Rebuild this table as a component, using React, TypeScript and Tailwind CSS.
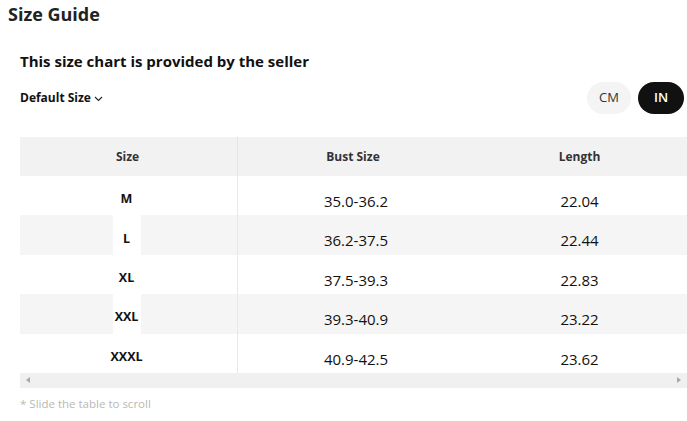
import React from 'react'

const rows = [
  { size: 'M', bust: '35.0-36.2', length: '22.04' },
  { size: 'L', bust: '36.2-37.5', length: '22.44' },
  { size: 'XL', bust: '37.5-39.3', length: '22.83' },
  { size: 'XXL', bust: '39.3-40.9', length: '23.22' },
  { size: 'XXXL', bust: '40.9-42.5', length: '23.62' },
]

const App = () => {
  return (
    <div className="w-[687px] h-[421px] overflow-hidden bg-white text-[#222] font-['Open_Sans','Noto_Sans',sans-serif]">
      <h1 className="pl-[8px] pt-[1px] text-[18px] leading-[26px] font-bold text-[#222]">Size Guide</h1>

      <div className="pl-[20px]">
        <h2 className="mt-[23px] text-[15px] leading-[22px] font-bold text-[#111]">
          This size chart is provided by the seller
        </h2>

        {/* Size selector + unit toggle */}
        <div className="mt-[10px] flex items-center justify-between pr-[3px]">
          <button className="flex items-center gap-[3px] text-[12px] font-bold text-[#111]">
            Default Size
            <svg width="9" height="6" viewBox="0 0 9 6" className="mt-[2px]">
              <path d="M1 1l3.5 3.5L8 1" fill="none" stroke="#222" strokeWidth="1.1" />
            </svg>
          </button>
          <div className="flex items-center gap-[7px]">
            <span className="flex h-[32px] w-[44px] items-center justify-center rounded-full bg-[#f4f4f4] text-[13px] text-[#333]">
              CM
            </span>
            <span className="flex h-[32px] w-[46px] items-center justify-center rounded-full bg-[#111] text-[13px] font-semibold text-white">
              IN
            </span>
          </div>
        </div>

        {/* Table */}
        <div className="mt-[23px] w-[667px]">
          <div className="grid grid-cols-[218px_234px_1fr] h-[39px] bg-[#f2f2f2] text-[12px] font-bold text-[#333]">
            <div className="flex items-center justify-center pr-[2px] border-r border-[#e4e4e4]">Size</div>
            <div className="flex items-center justify-center pr-[4px]">Bust Size</div>
            <div className="flex items-center justify-center">Length</div>
          </div>
          {rows.map((r, i) => (
            <div
              key={r.size}
              className={`grid grid-cols-[218px_234px_1fr] h-[39.4px] ${i % 2 === 1 ? 'bg-[#f5f5f5]' : 'bg-white'}`}
            >
              <div className="flex justify-center pr-[4px] border-r border-[#e8e8e8]">
                <span className="flex h-full min-w-[28px] items-center justify-center bg-white pt-[8px] text-[12.5px] font-bold text-[#111]">
                  {r.size}
                </span>
              </div>
              <div className="flex items-center justify-center pt-[11px] pl-[2px] text-[15px] text-[#111]">{r.bust}</div>
              <div className="flex items-center justify-center pt-[11px] text-[15px] text-[#111]">{r.length}</div>
            </div>
          ))}
          {/* horizontal scrollbar */}
          <div className="flex h-[15px] items-center justify-between bg-[#f0f0f0] px-[6px]">
            <svg width="4" height="6" viewBox="0 0 4 6">
              <path d="M4 0L0 3l4 3z" fill="#a8a8a8" />
            </svg>
            <svg width="4" height="6" viewBox="0 0 4 6">
              <path d="M0 0l4 3-4 3z" fill="#a8a8a8" />
            </svg>
          </div>
        </div>

        <p className="mt-[7px] text-[11.5px] text-[#b8b8b8]">* Slide the table to scroll</p>
      </div>
    </div>
  )
}

export default App
